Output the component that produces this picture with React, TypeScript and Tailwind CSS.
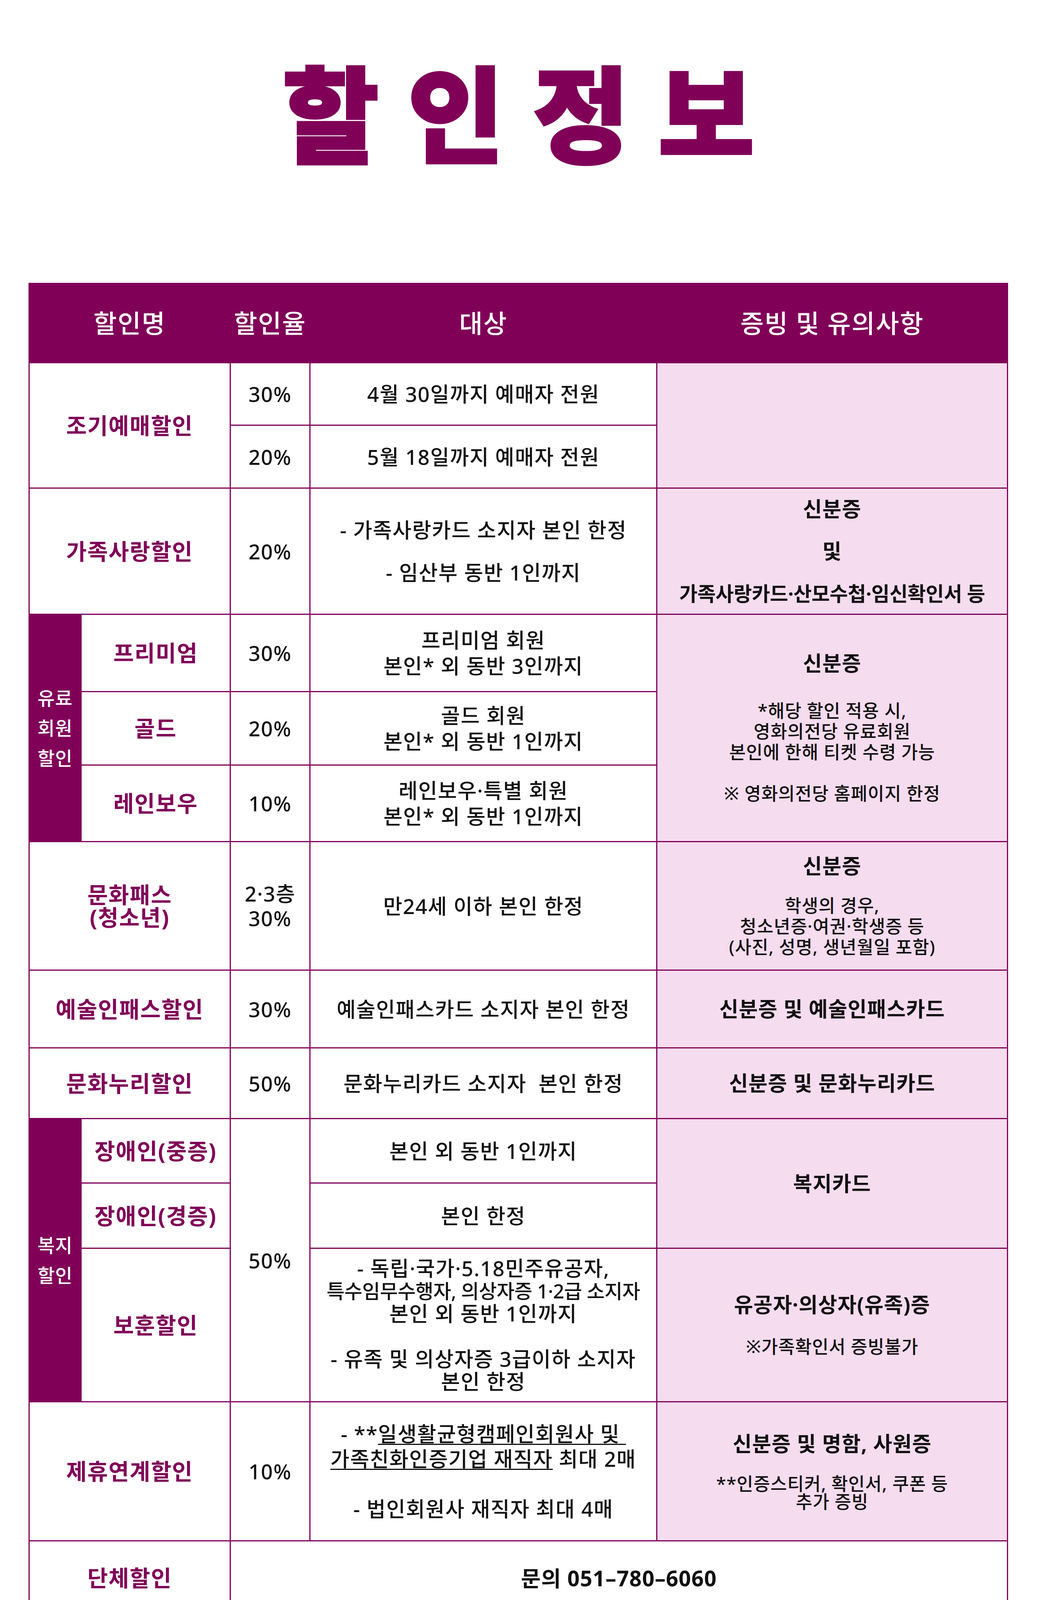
import React from 'react';

const FONT = "font-['Noto_Sans','Noto_Sans_CJK_KR',sans-serif]";

function Cell({ cls, bg = 'bg-white', children }: { cls: string; bg?: string; children?: React.ReactNode }) {
  return (
    <div className={`flex flex-col items-center justify-center text-center ${bg} ${cls}`}>{children}</div>
  );
}

function Label({ children, cls = 'leading-none' }: { children: React.ReactNode; cls?: string }) {
  return (
    <div className={`text-[57px] font-bold tracking-[0.03em] whitespace-nowrap text-[#800058] ${cls}`}>{children}</div>
  );
}

function Body({
  children,
  cls = 'leading-none',
  size = 'text-[53px] tracking-[0.03em]',
}: {
  children: React.ReactNode;
  cls?: string;
  size?: string;
}) {
  return <div className={`font-medium whitespace-nowrap text-[#111111] ${size} ${cls}`}>{children}</div>;
}

function Strong({
  children,
  cls = 'leading-[56px]',
  size = 'text-[53px] tracking-[0.02em]',
}: {
  children: React.ReactNode;
  cls?: string;
  size?: string;
}) {
  return <div className={`font-bold whitespace-nowrap text-[#111111] ${size} ${cls}`}>{children}</div>;
}

function Note({ children, cls = 'leading-[53px]' }: { children: React.ReactNode; cls?: string }) {
  return (
    <div className={`text-[46px] font-medium tracking-[0.02em] whitespace-nowrap text-[#111111] ${cls}`}>{children}</div>
  );
}

function Head({ children }: { children: React.ReactNode }) {
  return <div className="text-[65px] font-medium leading-none tracking-[0.03em] text-white">{children}</div>;
}

function Side({ children }: { children: React.ReactNode }) {
  return <div className="text-[48px] font-medium leading-[77px] tracking-[0.02em] text-white">{children}</div>;
}

export default function App() {
  return (
    <div className={`w-[2655px] h-[4217px] bg-white ${FONT}`}>
      <div className="h-[724px] pt-[159px]">
        <div className="text-center text-[268px] font-black leading-none tracking-[74px] pl-[74px] text-[#800058] [-webkit-text-stroke:6px_#800058]">
          할인정보
        </div>
      </div>

      <div className="ml-[73px] w-[2508px] grid grid-cols-[130px_379px_201px_885px_895px] grid-rows-[200px_157px_158px_320px_195px_185px_193px_326px_196px_178px_162px_164px_390px_353px_187px] gap-[3px] p-[3px] bg-[#800058]">
        {/* header */}
        <Cell cls="col-start-1 col-span-2 row-start-1" bg="bg-[#800058]"><Head>할인명</Head></Cell>
        <Cell cls="col-start-3 row-start-1" bg="bg-[#800058]"><Head>할인율</Head></Cell>
        <Cell cls="col-start-4 row-start-1" bg="bg-[#800058]"><Head>대상</Head></Cell>
        <Cell cls="col-start-5 row-start-1" bg="bg-[#800058]"><Head>증빙 및 유의사항</Head></Cell>

        {/* 조기예매 */}
        <Cell cls="col-start-1 col-span-2 row-start-2 row-span-2"><Label>조기예매할인</Label></Cell>
        <Cell cls="col-start-3 row-start-2"><Body>30%</Body></Cell>
        <Cell cls="col-start-4 row-start-2"><Body>4월 30일까지 예매자 전원</Body></Cell>
        <Cell cls="col-start-3 row-start-3"><Body>20%</Body></Cell>
        <Cell cls="col-start-4 row-start-3"><Body>5월 18일까지 예매자 전원</Body></Cell>
        <Cell cls="col-start-5 row-start-2 row-span-2" bg="bg-[#f6dcef]" />

        {/* 가족사랑 */}
        <Cell cls="col-start-1 col-span-2 row-start-4"><Label>가족사랑할인</Label></Cell>
        <Cell cls="col-start-3 row-start-4"><Body>20%</Body></Cell>
        <Cell cls="col-start-4 row-start-4">
          <Body cls="leading-[109px]">- 가족사랑카드 소지자 본인 한정</Body>
          <Body cls="leading-[109px]">- 임산부 동반 1인까지</Body>
        </Cell>
        <Cell cls="col-start-5 row-start-4" bg="bg-[#f6dcef]">
          <Strong cls="leading-[108px]">신분증</Strong>
          <Strong cls="leading-[108px]">및</Strong>
          <Strong cls="leading-[108px]" size="text-[51px] tracking-[-0.01em]">가족사랑카드·산모수첩·임신확인서 등</Strong>
        </Cell>

        {/* 유료회원 */}
        <Cell cls="col-start-1 row-start-5 row-span-3" bg="bg-[#800058]">
          <Side>유료</Side>
          <Side>회원</Side>
          <Side>할인</Side>
        </Cell>
        <Cell cls="col-start-2 row-start-5"><Label>프리미엄</Label></Cell>
        <Cell cls="col-start-3 row-start-5"><Body>30%</Body></Cell>
        <Cell cls="col-start-4 row-start-5">
          <Body cls="leading-[66px]">프리미엄 회원</Body>
          <Body cls="leading-[66px]">본인* 외 동반 3인까지</Body>
        </Cell>
        <Cell cls="col-start-2 row-start-6"><Label>골드</Label></Cell>
        <Cell cls="col-start-3 row-start-6"><Body>20%</Body></Cell>
        <Cell cls="col-start-4 row-start-6">
          <Body cls="leading-[66px]">골드 회원</Body>
          <Body cls="leading-[66px]">본인* 외 동반 1인까지</Body>
        </Cell>
        <Cell cls="col-start-2 row-start-7"><Label>레인보우</Label></Cell>
        <Cell cls="col-start-3 row-start-7"><Body>10%</Body></Cell>
        <Cell cls="col-start-4 row-start-7">
          <Body cls="leading-[66px]">레인보우·특별 회원</Body>
          <Body cls="leading-[66px]">본인* 외 동반 1인까지</Body>
        </Cell>
        <Cell cls="col-start-5 row-start-5 row-span-3" bg="bg-[#f6dcef]">
          <Strong>신분증</Strong>
          <div className="mt-[66px]">
            <Note>*해당 할인 적용 시,</Note>
            <Note>영화의전당 유료회원</Note>
            <Note>본인에 한해 티켓 수령 가능</Note>
            <Note>&nbsp;</Note>
            <Note>※ 영화의전당 홈페이지 한정</Note>
          </div>
        </Cell>

        {/* 문화패스 */}
        <Cell cls="col-start-1 col-span-2 row-start-8">
          <Label cls="leading-[58px]">문화패스</Label>
          <Label cls="leading-[58px]">(청소년)</Label>
        </Cell>
        <Cell cls="col-start-3 row-start-8">
          <Body cls="leading-[63px]">2·3층</Body>
          <Body cls="leading-[63px]">30%</Body>
        </Cell>
        <Cell cls="col-start-4 row-start-8"><Body>만24세 이하 본인 한정</Body></Cell>
        <Cell cls="col-start-5 row-start-8" bg="bg-[#f6dcef]">
          <Strong>신분증</Strong>
          <div className="mt-[46px]">
            <Note>학생의 경우,</Note>
            <Note>청소년증·여권·학생증 등</Note>
            <Note>(사진, 성명, 생년월일 포함)</Note>
          </div>
        </Cell>

        {/* 예술인패스 */}
        <Cell cls="col-start-1 col-span-2 row-start-9"><Label>예술인패스할인</Label></Cell>
        <Cell cls="col-start-3 row-start-9"><Body>30%</Body></Cell>
        <Cell cls="col-start-4 row-start-9"><Body>예술인패스카드 소지자 본인 한정</Body></Cell>
        <Cell cls="col-start-5 row-start-9" bg="bg-[#f6dcef]"><Strong>신분증 및 예술인패스카드</Strong></Cell>

        {/* 문화누리 */}
        <Cell cls="col-start-1 col-span-2 row-start-10"><Label>문화누리할인</Label></Cell>
        <Cell cls="col-start-3 row-start-10"><Body>50%</Body></Cell>
        <Cell cls="col-start-4 row-start-10">
          <Body cls="leading-none">문화누리카드 소지자&nbsp; 본인 한정</Body>
        </Cell>
        <Cell cls="col-start-5 row-start-10" bg="bg-[#f6dcef]"><Strong>신분증 및 문화누리카드</Strong></Cell>

        {/* 복지할인 */}
        <Cell cls="col-start-1 row-start-11 row-span-3" bg="bg-[#800058]">
          <Side>복지</Side>
          <Side>할인</Side>
        </Cell>
        <Cell cls="col-start-2 row-start-11"><Label>장애인(중증)</Label></Cell>
        <Cell cls="col-start-2 row-start-12"><Label>장애인(경증)</Label></Cell>
        <Cell cls="col-start-2 row-start-13"><Label>보훈할인</Label></Cell>
        <Cell cls="col-start-3 row-start-11 row-span-3"><Body>50%</Body></Cell>
        <Cell cls="col-start-4 row-start-11"><Body>본인 외 동반 1인까지</Body></Cell>
        <Cell cls="col-start-4 row-start-12"><Body>본인 한정</Body></Cell>
        <Cell cls="col-start-4 row-start-13">
          <Body cls="leading-[58px]">- 독립·국가·5.18민주유공자,</Body>
          <Body cls="leading-[58px]" size="text-[50px] tracking-[-0.01em]">특수임무수행자, 의상자증 1·2급 소지자</Body>
          <Body cls="leading-[58px]">본인 외 동반 1인까지</Body>
          <Body cls="leading-[58px]">&nbsp;</Body>
          <Body cls="leading-[58px]">- 유족 및 의상자증 3급이하 소지자</Body>
          <Body cls="leading-[58px]">본인 한정</Body>
        </Cell>
        <Cell cls="col-start-5 row-start-11 row-span-2" bg="bg-[#f6dcef]"><Strong>복지카드</Strong></Cell>
        <Cell cls="col-start-5 row-start-13" bg="bg-[#f6dcef]">
          <Strong>유공자·의상자(유족)증</Strong>
          <div className="mt-[52px]">
            <Note>※가족확인서 증빙불가</Note>
          </div>
        </Cell>

        {/* 제휴연계 */}
        <Cell cls="col-start-1 col-span-2 row-start-14"><Label>제휴연계할인</Label></Cell>
        <Cell cls="col-start-3 row-start-14"><Body>10%</Body></Cell>
        <Cell cls="col-start-4 row-start-14">
          <Body cls="leading-[64px]">
            - **<span className="underline decoration-[3px] underline-offset-[5px]">일생활균형캠페인회원사 및&nbsp;</span>
          </Body>
          <Body cls="leading-[64px]">
            <span className="underline decoration-[3px] underline-offset-[5px]">가족친화인증기업 재직자</span> 최대 2매
          </Body>
          <Body cls="leading-[64px]">&nbsp;</Body>
          <Body cls="leading-[64px]">- 법인회원사 재직자 최대 4매</Body>
        </Cell>
        <Cell cls="col-start-5 row-start-14" bg="bg-[#f6dcef]">
          <Strong>신분증 및 명함, 사원증</Strong>
          <div className="mt-[50px]">
            <Note cls="leading-[46px]">**인증스티커, 확인서, 쿠폰 등</Note>
            <Note cls="leading-[46px]">추가 증빙</Note>
          </div>
        </Cell>

        {/* 단체 */}
        <Cell cls="col-start-1 col-span-2 row-start-15"><Label>단체할인</Label></Cell>
        <Cell cls="col-start-3 col-span-3 row-start-15">
          <div className="text-[55px] font-bold leading-none tracking-[0.02em] text-[#111111]">문의 051–780–6060</div>
        </Cell>
      </div>
    </div>
  );
}
